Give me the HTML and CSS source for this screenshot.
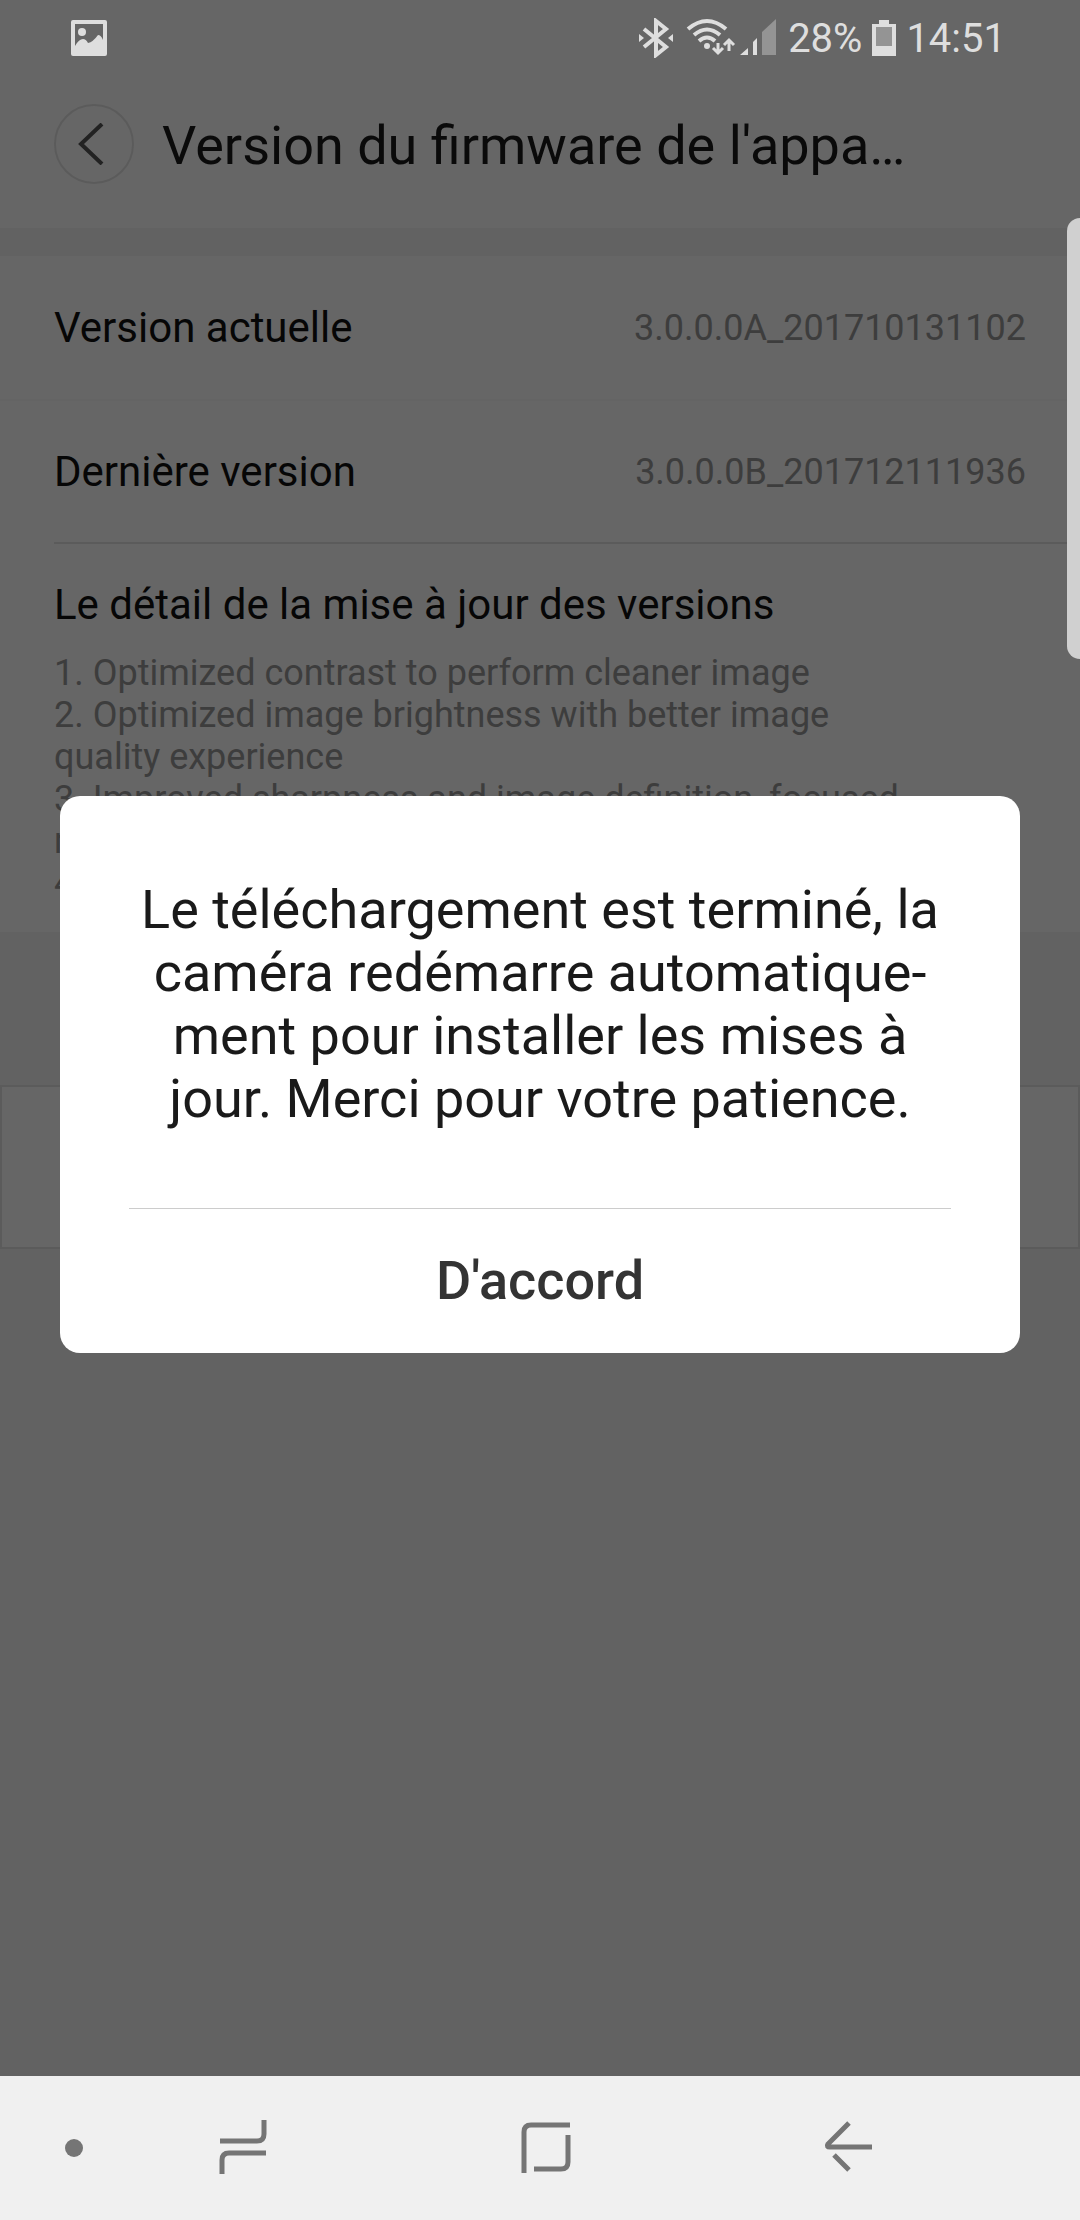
FILE: index.html
```
<!DOCTYPE html>
<html lang="fr">
<head>
    <meta charset="UTF-8">
    <meta name="viewport" content="width=device-width">
    <title>Version du firmware</title>
    <link rel="stylesheet" href="styles.css">
</head>
<body>
    <div id="screen">
        <div id="status">
            <svg class="photo" width="36" height="36" viewBox="0 0 36 36"><path fill-rule="evenodd" d="M2 0h32a2 2 0 0 1 2 2v32a2 2 0 0 1-2 2H2a2 2 0 0 1-2-2V2a2 2 0 0 1 2-2zM4 4v22q4-7 8-7 3 0 5 4 5-1 10-8 3 0 5 5V4z"/><circle cx="11" cy="12" r="4"/></svg>
            <div class="icons">
                <svg width="36" height="40" viewBox="0 0 36 40"><path class="line" d="M6 11l22 18-10 8V3l10 8L6 29"/><path d="M1 16l5 4-5 4zM35 16l-5 4 5 4z"/></svg>
                <svg class="wifi" width="50" height="40" viewBox="0 0 50 40"><path class="line" d="M2 11q19-16 38 0M8 17q13-11 26 0M13 23q8-7 16 0"/><circle cx="21" cy="28" r="3"/><path class="thin" d="M32 25v10M27 30l5 5 5-5M43 33V22M38 27l5-5 5 5"/></svg>
                <svg class="signal" width="36" height="40" viewBox="0 0 36 40"><path d="M0 37l8-7v7zM13 24l4-4v17h-4z"/><path class="dim" d="M22 14L36 1v36H22z"/></svg>
                <span class="percent">28%</span>
                <svg class="battery" width="24" height="38" viewBox="0 0 24 38"><path d="M7 1h10v4h7v32H0V5h7z"/><path class="empty" d="M4 8h16v19H4z"/></svg>
                <span>14:51</span>
            </div>
        </div>
        <div id="app">
            <div class="header">
                <button class="back" type="button" aria-label="Retour"><svg width="32" height="42" viewBox="0 0 32 42"><path d="M24 1L3 21l21 20"/></svg></button>
                <h1>Version du firmware de l'appa…</h1>
            </div>
            <div class="info">
                <div class="row"><span>Version actuelle</span><span class="value">3.0.0.0A_201710131102</span></div>
                <div class="row last"><span>Dernière version</span><span class="value">3.0.0.0B_201712111936</span></div>
                <div class="detail">
                    <h2>Le détail de la mise à jour des versions</h2>
                    <p>1. Optimized contrast to perform cleaner image<br>2. Optimized image brightness with better image<br>quality experience<br>3. Improved sharpness and image definition, focused<br>more on details<br>4. Bug fixes</p>
                </div>
            </div>
            <button class="update" type="button" aria-label="Mettre à jour"></button>
        </div>
        <div id="mask">
            <div class="dialog" role="dialog">
                <p>Le téléchargement est terminé, la<br>caméra redémarre automatique-<br>ment pour installer les mises à<br>jour. Merci pour votre patience.</p>
                <button type="button">D'accord</button>
            </div>
        </div>
        <div class="edge"></div>
        <div id="nav">
            <button class="dot" type="button" aria-label="Masquer"><svg width="20" height="20" viewBox="0 0 20 20"><circle cx="10" cy="10" r="9"/></svg></button>
            <button type="button" aria-label="Applications récentes"><svg width="60" height="60" viewBox="0 0 60 60"><path d="M7 23h37q7 0 7-7V2M53 35H16q-7 0-7 7v14"/></svg></button>
            <button type="button" aria-label="Accueil"><svg width="60" height="60" viewBox="0 0 60 60"><path d="M8 55V14q0-7 7-7h39M52 17v27q0 7-7 7H18"/></svg></button>
            <button type="button" aria-label="Retour"><svg width="60" height="60" viewBox="0 0 60 60"><path d="M31 5L10 26q-2 3 2 3h42M16 37l15 15"/></svg></button>
        </div>
    </div>
</body>
</html>
```
FILE: styles.css
```
body,div,h1,h2,p,button{margin: 0; padding: 0;}
body{font-family: Roboto, "Noto Sans", sans-serif; background-color: #f4f4f4;}
button{border: 0; background: none; font-family: inherit; cursor: pointer;}
svg{display: block;}
#screen{position: relative; display: flex; flex-direction: column; min-height: 100vh;}
/*status bar, stays above the mask*/
#status{position: relative; z-index: 2; display: flex; justify-content: space-between; align-items: center; box-sizing: border-box; height: 76px; padding: 0 74px 0 71px; font-size: 40px; color: #dedede;}
#status svg{fill: #dedede;}
#status .icons{display: flex; align-items: center;}
#status .line{fill: none; stroke: #dedede; stroke-width: 4;}
#status .thin{fill: none; stroke: #dedede; stroke-width: 3;}
#status .dim,#status .empty{fill: #949494;}
#status .wifi{margin-left: 12px;}
#status .signal{margin-left: 4px;}
#status .percent{margin-left: 12px;}
#status .battery{margin: 0 10px;}
/*page*/
#app{flex: 1; background-color: #f4f4f4;}
#screen:before{content: ""; position: absolute; top: 0; left: 0; right: 0; height: 76px; background-color: #fff;}
#app .header{display: flex; align-items: center; height: 152px; padding: 0 54px; background-color: #fff;}
#app .back{display: flex; align-items: center; justify-content: center; width: 80px; height: 80px; margin-bottom: 16px; box-sizing: border-box; border: 2px solid #e4e4e4; border-radius: 50%;}
#app .back svg{fill: none; stroke: #555; stroke-width: 4;}
#app h1{margin: 0 0 12px 28px; font-size: 54px; line-height: 64px; font-weight: normal; color: #1a1a1a; white-space: nowrap;}
#app .info{margin-top: 28px; background-color: #fff; color: #111;}
#app .row{display: flex; justify-content: space-between; align-items: center; height: 143px; padding: 0 54px; font-size: 42px; border-bottom: 2px solid #fbfbfb;}
#app .last{padding: 0 54px 0 0; margin-left: 54px; border-color: #e4e4e4; height: 141px;}
#app .value{font-size: 36px; color: #999;}
#app .detail{padding: 36px 54px 28px;}
#app h2{font-size: 42px; line-height: 50px; font-weight: normal;}
#app .detail p{margin-top: 22px; font-size: 36px; line-height: 42px; color: #999;}
#app .update{display: block; box-sizing: border-box; width: 100%; height: 164px; margin-top: 153px; background-color: #fff; border: 2px solid #e4e4e4;}
/*dialog*/
#mask{position: absolute; top: 0; left: 0; right: 0; bottom: 144px; display: flex; align-items: center; padding: 72px 60px 0; background-color: rgba(0,0,0,0.6);}
#mask .dialog{flex: 1; padding: 0 69px; background-color: #fff; border-radius: 20px; text-align: center;}
#mask p{padding: 82px 0 78px; font-size: 54px; line-height: 63px; color: #1a1a1a; white-space: nowrap;}
#mask button{width: 100%; height: 145px; border-top: 1px solid #ccc; font-size: 54px; font-weight: 500; color: #333;}
.edge{position: absolute; z-index: 3; top: 218px; right: 0; width: 13px; height: 441px; border-radius: 14px 0 0 14px; background-color: #d0d0d0;}
/*navigation bar*/
#nav{position: relative; display: flex; align-items: center; height: 144px; padding-left: 64px; background-color: #f0f0f0;}
#nav button{flex: 0 0 28vw; display: flex; justify-content: center;}
#nav .dot{flex: 0 0 28px; justify-content: flex-start;}
#nav svg{fill: none; stroke: #757575; stroke-width: 5;}
#nav .dot svg{fill: #757575; stroke: none;}
```
